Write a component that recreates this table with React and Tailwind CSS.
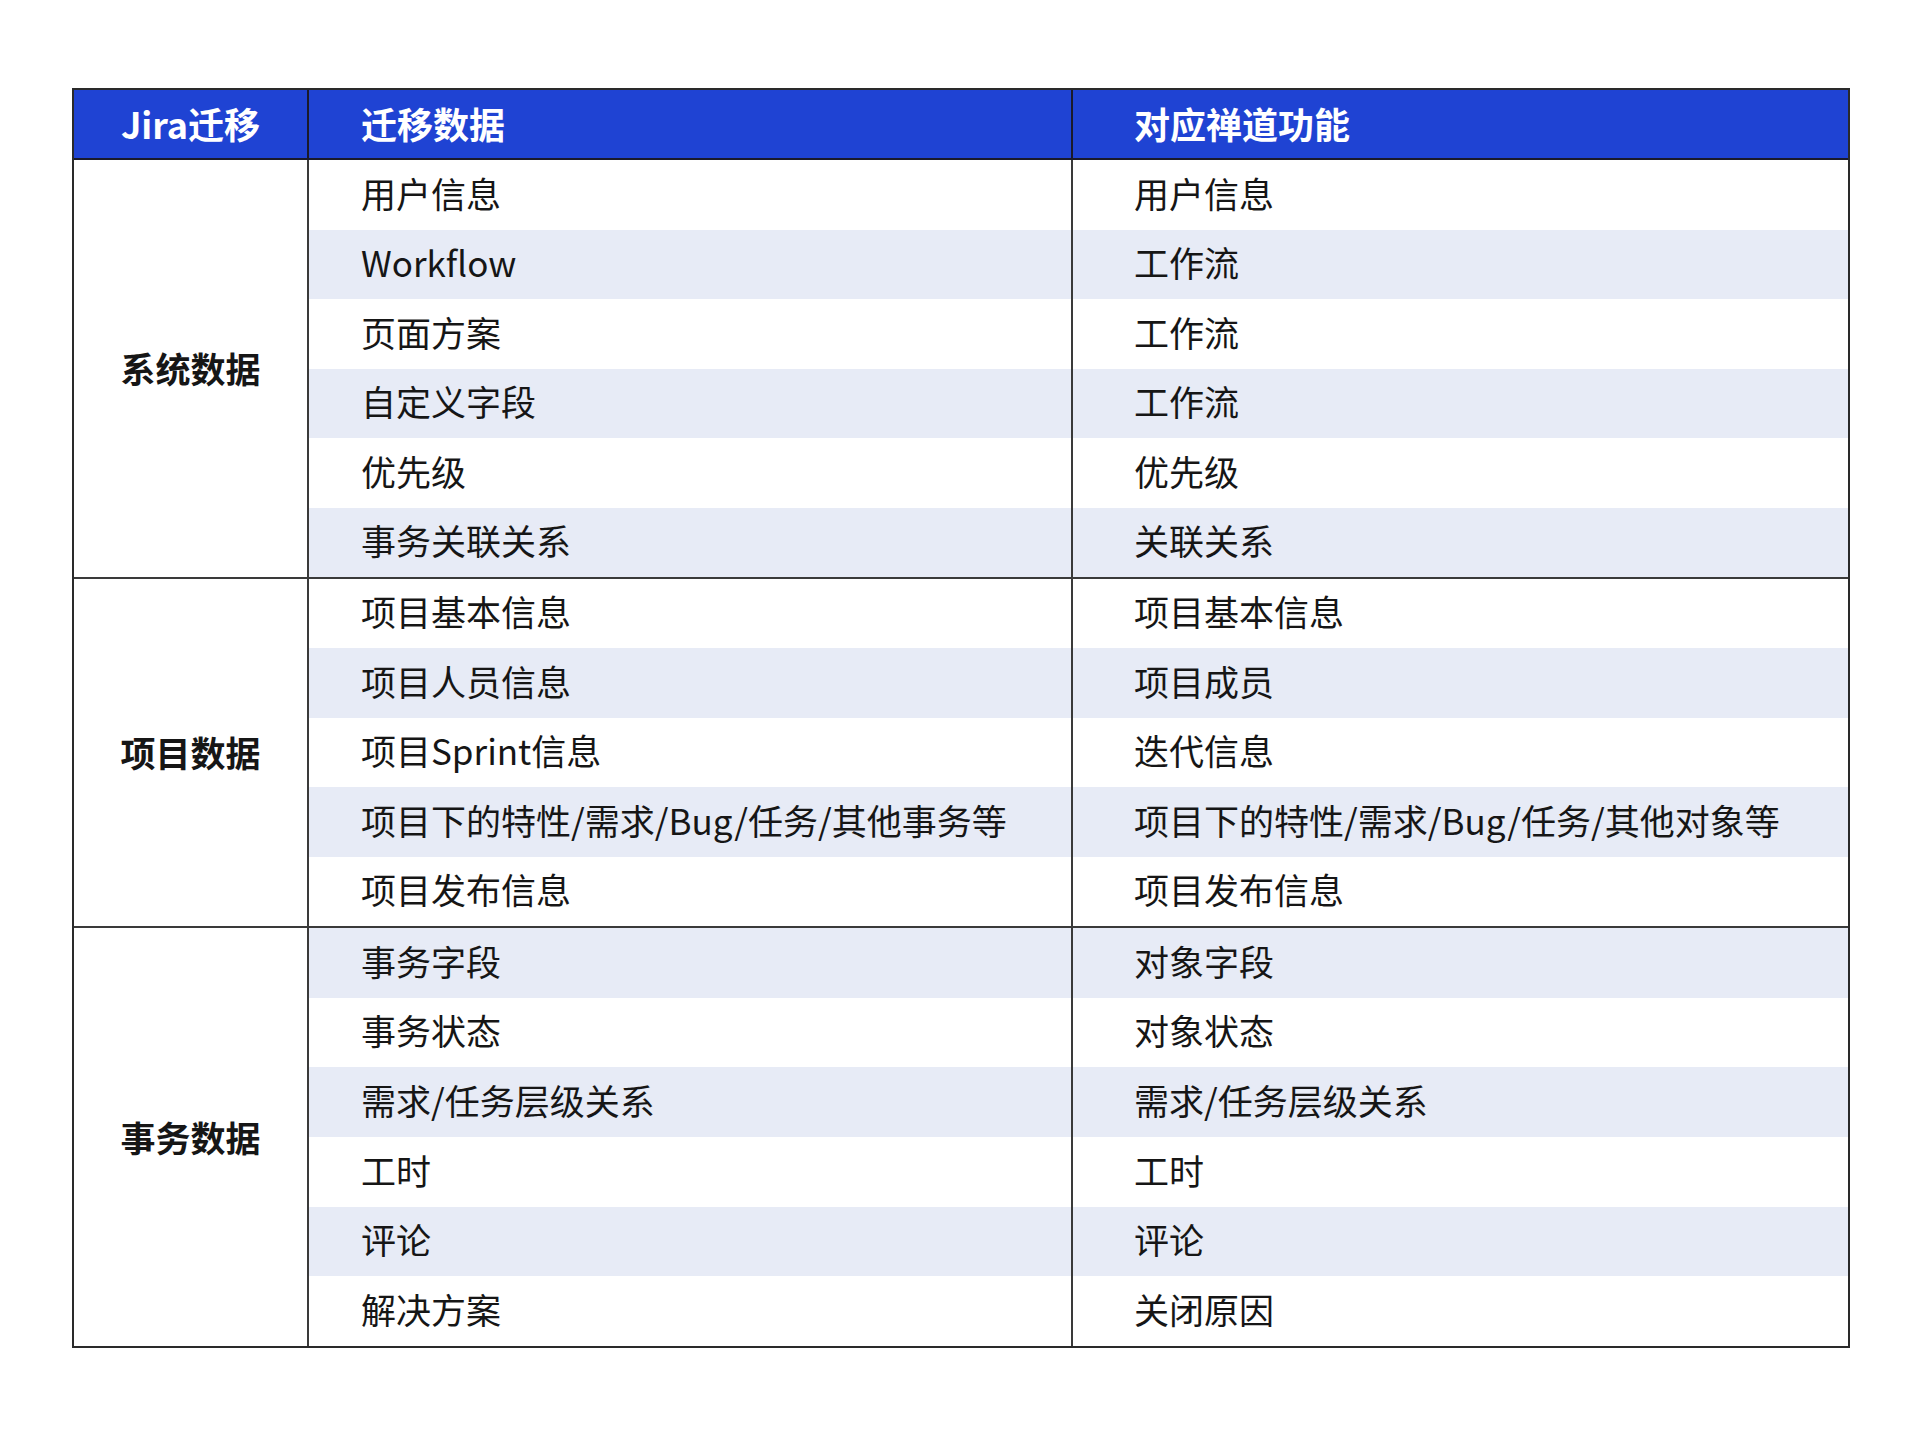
import React from "react";

const groups = [
  {
    label: "系统数据",
    h: "h-[417px]",
    rows: [
      ["用户信息", "用户信息"],
      ["Workflow", "工作流"],
      ["页面方案", "工作流"],
      ["自定义字段", "工作流"],
      ["优先级", "优先级"],
      ["事务关联关系", "关联关系"],
    ],
  },
  {
    label: "项目数据",
    h: "h-[349px]",
    rows: [
      ["项目基本信息", "项目基本信息"],
      ["项目人员信息", "项目成员"],
      ["项目Sprint信息", "迭代信息"],
      ["项目下的特性/需求/Bug/任务/其他事务等", "项目下的特性/需求/Bug/任务/其他对象等"],
      ["项目发布信息", "项目发布信息"],
    ],
  },
  {
    label: "事务数据",
    h: "h-[420px]",
    rows: [
      ["事务字段", "对象字段"],
      ["事务状态", "对象状态"],
      ["需求/任务层级关系", "需求/任务层级关系"],
      ["工时", "工时"],
      ["评论", "评论"],
      ["解决方案", "关闭原因"],
    ],
  },
];

export default function App() {
  let idx = 0;
  return (
    <div
      className="w-[1920px] h-[1434px] bg-white pt-[88px] pl-[72px]"
      style={{ fontFamily: '"Noto Sans CJK SC", "Noto Sans", sans-serif' }}
    >
      <div className="w-[1778px] border-2 border-[#2a2a2a] text-[35px] text-[#161616]">
        <div className="flex h-[70px] bg-[#1f43d3] text-white font-bold text-[36px] border-b-2 border-[#1a1a2a]">
          <div className="w-[235px] shrink-0 flex items-center justify-center pb-[2px] border-r-2 border-[#1a1a2a]">
            Jira迁移
          </div>
          <div className="w-[764px] shrink-0 flex items-center pl-[52px] pb-[2px] border-r-2 border-[#1a1a2a]">
            迁移数据
          </div>
          <div className="flex-1 flex items-center pl-[61px] pb-[2px]">对应禅道功能</div>
        </div>
        {groups.map((g, gi) => (
          <div
            key={g.label}
            className={`flex ${g.h} ${gi > 0 ? "border-t-2 border-[#3a3a3a]" : ""}`}
          >
            <div className="w-[235px] shrink-0 flex items-center justify-center font-bold border-r-2 border-[#3a3a3a]">
              {g.label}
            </div>
            <div className="flex-1 flex flex-col">
              {g.rows.map((r) => {
                const striped = idx++ % 2 === 1;
                return (
                  <div
                    key={r[0] + idx}
                    className={`flex-1 flex ${striped ? "bg-[#e7ebf6]" : "bg-white"}`}
                  >
                    <div className="w-[764px] shrink-0 flex items-center pl-[52px] pb-[4px] border-r-2 border-[#3a3a3a] whitespace-nowrap">
                      {r[0]}
                    </div>
                    <div className="flex-1 flex items-center pl-[61px] pb-[4px] whitespace-nowrap">
                      {r[1]}
                    </div>
                  </div>
                );
              })}
            </div>
          </div>
        ))}
      </div>
    </div>
  );
}
